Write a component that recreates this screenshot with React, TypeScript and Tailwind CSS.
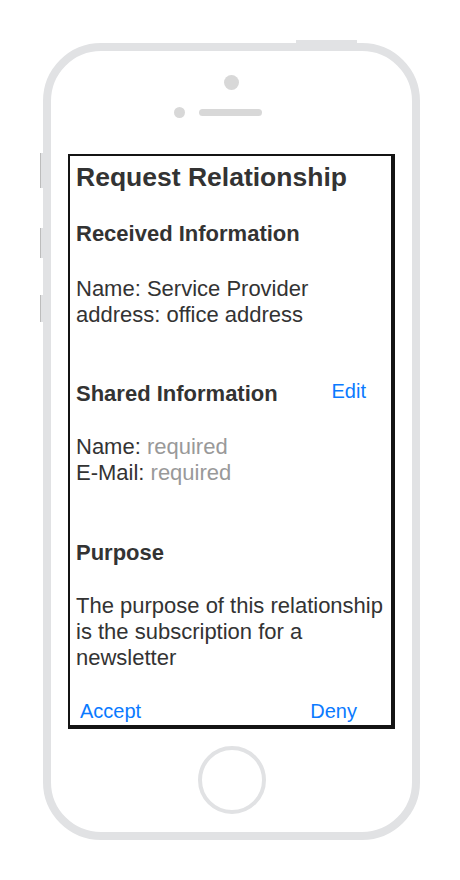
import React from 'react';

const font = { fontFamily: '"Liberation Sans", Arial, sans-serif' };

const SideButton = ({ className }: { className: string }) => (
  <div className={`absolute left-[-11px] w-[4px] bg-[#e1e2e4] border-l border-[#bcbcbc] ${className}`} />
);

const App: React.FC = () => {
  return (
    <div className="w-[460px] h-[880px] bg-white overflow-hidden" style={font}>
      <div className="relative ml-[43px] mt-[43px] w-[377px] h-[797px] rounded-[58px] border-8 border-[#e1e2e4] bg-white">
        {/* hardware buttons */}
        <div className="absolute top-[-11px] left-[245px] w-[61px] h-[4px] bg-[#e1e2e4]" />
        <SideButton className="top-[102px] h-[35px]" />
        <SideButton className="top-[177px] h-[30px]" />
        <SideButton className="top-[244px] h-[27px]" />

        {/* camera + speaker */}
        <div className="flex flex-col">
          <div className="mx-auto mt-[24px] w-[15px] h-[15px] rounded-full bg-[#d8d8d8]" />
          <div className="flex items-center mt-[17px] ml-[123px]">
            <div className="w-[11px] h-[11px] rounded-full bg-[#d8d8d8]" />
            <div className="ml-[14px] w-[63px] h-[7px] rounded-full bg-[#d8d8d8]" />
          </div>
        </div>

        {/* screen */}
        <div className="ml-[17px] mt-[36px] w-[327px] h-[575px] border-t-2 border-l-2 border-r-4 border-b-4 border-[#141414] flex flex-col text-[#333333]">
          <div className="pl-[6px] pt-[6px] flex flex-col">
            <h1 className="text-[26.5px] leading-[30px] font-bold">Request Relationship</h1>

            <h2 className="mt-[29px] text-[22px] leading-[26px] font-bold">Received Information</h2>
            <p className="mt-[29px] text-[22px] leading-[26px]">
              Name: Service Provider
              <br />
              address: office address
            </p>

            <div className="mt-[53px] flex justify-between items-start pr-[25px]">
              <h2 className="text-[22px] leading-[26px] font-bold">Shared Information</h2>
              <button className="-mt-[3px] text-[20px] leading-[26px] text-[#0a7aff]">Edit</button>
            </div>
            <p className="mt-[27px] text-[22px] leading-[26px]">
              Name: <span className="text-[#999999]">required</span>
              <br />
              E-Mail: <span className="text-[#999999]">required</span>
            </p>

            <h2 className="mt-[54px] text-[22px] leading-[26px] font-bold">Purpose</h2>
            <p className="mt-[27px] text-[22px] leading-[26px]">
              The purpose of this relationship is the subscription for a newsletter
            </p>
          </div>

          <div className="mt-auto flex justify-between pl-[10px] pr-[34px] pb-[1px] text-[20px] leading-[26px] text-[#0a7aff]">
            <button>Accept</button>
            <button>Deny</button>
          </div>
        </div>

        {/* home button */}
        <div className="mx-auto mt-[17px] w-[68px] h-[68px] rounded-full border-4 border-[#e1e2e4]" />
      </div>
    </div>
  );
};

export default App;
